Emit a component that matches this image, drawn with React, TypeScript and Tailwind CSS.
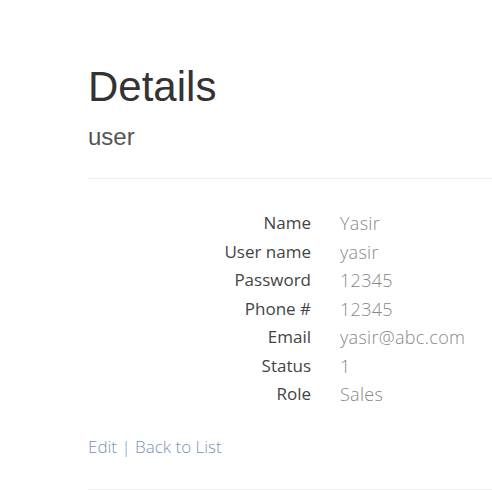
const rows: [string, string][] = [
  ["Name", "Yasir"],
  ["User name", "yasir"],
  ["Password", "12345"],
  ["Phone #", "12345"],
  ["Email", "yasir@abc.com"],
  ["Status", "1"],
  ["Role", "Sales"],
];

export default function App() {
  return (
    <div className="min-h-screen bg-white pl-[88px] pt-[64px]">
      <h2 className="text-[42px] leading-[46px] text-[#333] font-['Liberation_Sans',Arial,sans-serif]">
        Details
      </h2>
      <h4 className="mt-[13px] text-[24px] leading-[28px] text-[#555] font-['Liberation_Sans',Arial,sans-serif]">
        user
      </h4>
      <hr className="mt-[27px] border-0 border-t border-[#eee]" />
      <dl className="mt-[30px] grid grid-cols-[223px_1fr] gap-x-[29px] font-['Open_Sans',sans-serif] text-[17px] leading-[28.5px]">
        {rows.map(([label, value]) => (
          <div key={label} className="contents">
            <dt className="text-right text-[#444]">{label}</dt>
            <dd className="text-[#888] font-light text-[18px] tracking-[0.3px]">{value}</dd>
          </div>
        ))}
      </dl>
      <p className="mt-[26px] font-['Open_Sans',sans-serif] text-[17px] leading-[24px] text-[#7d93bb] font-light">
        <a href="#">Edit</a> | <a href="#">Back to List</a>
      </p>
      <hr className="mt-[30px] border-0 border-t border-[#eee]" />
    </div>
  );
}
